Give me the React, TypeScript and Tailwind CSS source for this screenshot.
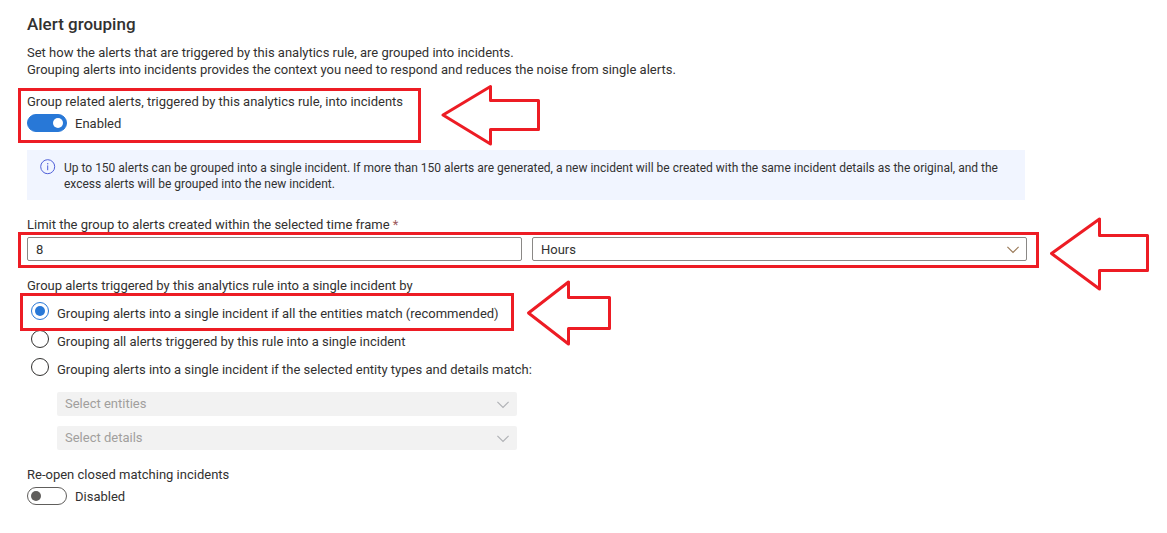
import React, { useState } from "react";

function Arrow({ className, width, height, points }: { className: string; width: number; height: number; points: string }) {
  return (
    <svg className={"pointer-events-none absolute " + className} width={width} height={height} viewBox={`0 0 ${width} ${height}`} fill="none" aria-hidden="true">
      <polygon points={points} stroke="#ed1c24" strokeWidth="3" strokeLinejoin="round" />
    </svg>
  );
}

function Frame({ className }: { className: string }) {
  return <div className={"pointer-events-none absolute z-10 border-[3px] border-[#ed1c24] " + className} aria-hidden="true" />;
}

function Chevron({ className }: { className: string }) {
  return (
    <svg className={"pointer-events-none absolute right-2 top-[9px] " + className} width="12" height="8" viewBox="0 0 12 8" fill="none" stroke="currentColor" strokeWidth="1.2" aria-hidden="true">
      <path d="M0.4 0.9 L6 6.5 L11.6 0.9" />
    </svg>
  );
}

function Toggle({ id, label, initial }: { id: string; label: string; initial: boolean }) {
  const [on, setOn] = useState(initial);
  return (
    <div>
      <div id={id}>{label}</div>
      <div className="mt-1 flex h-[18px] items-center gap-2">
        <button
          type="button"
          role="switch"
          aria-checked={on}
          aria-labelledby={id}
          onClick={() => setOn(!on)}
          className={
            "flex h-[18px] w-10 items-center rounded-full border px-[3px] " +
            (on ? "justify-end border-[#2878d7] bg-[#2878d7]" : "justify-start border-[#605e5c] bg-white")
          }
        >
          <span className={"size-[10px] rounded-full " + (on ? "bg-white" : "bg-[#605e5c]")} />
        </button>
        <span>{on ? "Enabled" : "Disabled"}</span>
      </div>
    </div>
  );
}

const modes = [
  "Grouping alerts into a single incident if all the entities match (recommended)",
  "Grouping all alerts triggered by this rule into a single incident",
  "Grouping alerts into a single incident if the selected entity types and details match:",
];

export default function App() {
  const [mode, setMode] = useState(0);
  return (
    <main className="min-h-screen bg-white px-[27px] py-3 font-[Roboto,'Open_Sans',sans-serif] text-[13px] leading-[17px] text-[#323130]">
      <div className="max-w-[1000px]">
        <h1 className="text-[17px] font-medium leading-6">Alert grouping</h1>
        <p className="mt-2">
          Set how the alerts that are triggered by this analytics rule, are grouped into incidents.
          <br />
          Grouping alerts into incidents provides the context you need to respond and reduces the noise from single alerts.
        </p>

        <section className="relative mt-[15px]">
          <Toggle id="group-related" label="Group related alerts, triggered by this analytics rule, into incidents" initial={true} />
          <Frame className="-left-[9px] -top-[5px] h-[55px] w-[403px]" />
          <Arrow className="-top-[10px] left-[413px]" width={102} height={64} points="3,32 50.5,3.5 50.5,17.5 98.5,17.5 98.5,46.5 50.5,46.5 50.5,61" />
        </section>

        <div className="mt-[18px] flex max-w-[998px] items-start gap-2 bg-[#f1f5ff] pb-2 pl-[13px] pr-5 pt-[10px] text-[12px] leading-4">
          <svg className="-mt-px shrink-0" width="16" height="16" viewBox="0 0 16 16" fill="none" aria-hidden="true">
            <circle cx="7.7" cy="7.7" r="7" stroke="#4f5fd8" />
            <path d="M7.7 6.4 V11.2" stroke="#4f5fd8" />
            <rect x="7.1" y="4.1" width="1.2" height="1.2" fill="#4f5fd8" />
          </svg>
          <p>
            Up to 150 alerts can be grouped into a single incident. If more than 150 alerts are generated, a new incident will be created with the same
            incident details as the original, and the excess alerts will be grouped into the new incident.
          </p>
        </div>

        <section className="mt-4">
          <label htmlFor="amount" className="block">
            Limit the group to alerts created within the selected time frame <span className="text-[#9c5a5e]">*</span>
          </label>
          <div className="relative mt-1 grid grid-cols-2 gap-[10px]">
            <input id="amount" type="text" defaultValue="8" className="h-6 min-w-0 rounded-[2px] border border-[#8a8886] bg-white px-2" />
            <div className="relative">
              <select aria-label="Time unit" defaultValue="Hours" className="h-6 w-full appearance-none rounded-[2px] border border-[#8a8886] bg-white px-2">
                <option>Minutes</option>
                <option>Hours</option>
                <option>Days</option>
              </select>
              <Chevron className="text-[#9a7a58]" />
            </div>
            <Frame className="-bottom-[7px] -left-[9px] -right-3 -top-[5px]" />
            <Arrow className="-top-[22px] left-full ml-[21px]" width={102} height={76} points="3.5,38.5 51.5,4 51.5,20.5 99.5,20.5 99.5,55.5 51.5,55.5 51.5,74" />
          </div>
        </section>

        <fieldset className="mt-4">
          <legend>Group alerts triggered by this analytics rule into a single incident by</legend>
          <div className="relative mt-[5px]">
            {modes.map((text, i) => (
              <label key={text} className="flex h-7 items-start gap-2 pl-1">
                <input
                  type="radio"
                  name="mode"
                  checked={mode === i}
                  onChange={() => setMode(i)}
                  className="mt-[3px] size-[18px] shrink-0 appearance-none rounded-full border border-[#323130] bg-clip-content p-[3px] checked:border-[#2878d7] checked:bg-[#2878d7]"
                />
                <span className="mt-[6px]">{text}</span>
              </label>
            ))}
            <Frame className="-left-[7px] -top-[6px] h-[38px] w-[494px]" />
            <Arrow className="-top-[20px] left-[498px]" width={87} height={69} points="3.5,34 43.5,3 43.5,18.5 84.5,18.5 84.5,49.5 43.5,49.5 43.5,65" />
          </div>
          <div className="ml-[30px] mt-[9px] flex max-w-[460px] flex-col gap-[10px]">
            {["Select entities", "Select details"].map((text) => (
              <div key={text} className="relative">
                <select disabled aria-label={text} className="block h-6 w-full appearance-none rounded-[2px] bg-[#f2f2f2] px-2 pb-[2px] text-[#a19f9d] opacity-100">
                  <option>{text}</option>
                </select>
                <Chevron className="text-[#b0b2b6]" />
              </div>
            ))}
          </div>
        </fieldset>

        <section className="mt-4">
          <Toggle id="reopen" label="Re-open closed matching incidents" initial={false} />
        </section>
      </div>
    </main>
  );
}
